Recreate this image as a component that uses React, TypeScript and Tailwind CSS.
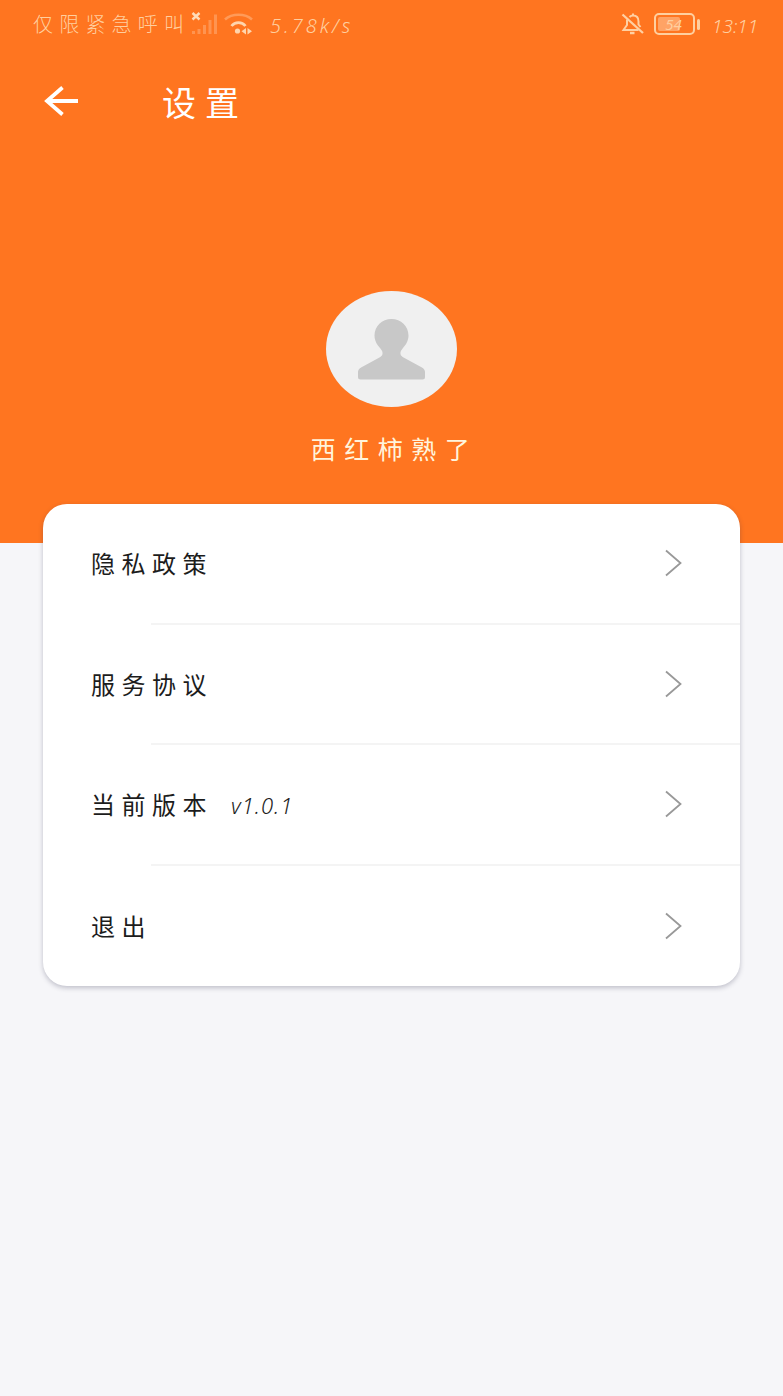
const menuItems = [
  { label: "隐私政策" },
  { label: "服务协议" },
  { label: "当前版本", detail: "v1.0.1" },
  { label: "退出" },
];

function SignalIcon() {
  return (
    <svg className="ml-[7px] h-[24px] w-[28px] shrink-0" viewBox="0 0 28 24" fill="none">
      <path d="M1.500 1l7 6.500M8.500 1l-7 6.500" stroke="#ffdcb8" strokeWidth="2.400" />
      <path d="M2.500 19v3M8 17v5M13.500 13v9M19 8v14M24.500 2.500v19.500" stroke="#ff9450" strokeWidth="3" />
    </svg>
  );
}

function WifiIcon() {
  return (
    <svg className="ml-[5px] h-[24px] w-[29px] shrink-0" viewBox="0 0 29 24" fill="none">
      <path d="M1 7.500C8 1.200 21 1.200 28 7.500" stroke="#ff9a58" strokeWidth="2.600" />
      <path d="M7.500 14c3.500-4.500 10.500-4.500 14 0" stroke="#ffd5ad" strokeWidth="2.800" />
      <circle cx="13.500" cy="19" r="2.600" fill="#ffd5ad" />
      <path d="M22 16v6.500l-4.500-3.250zM23.500 16v6.500l4.500-3.250z" fill="#ffd5ad" />
    </svg>
  );
}

function MutedBellIcon() {
  return (
    <svg className="h-[24px] w-[24px] shrink-0" viewBox="0 0 24 24" fill="none" stroke="#ffd0a3" strokeWidth="2">
      <path d="M6 7.500v5.500L2.500 18h15M8.500 5C9.500 4 10.700 3.500 12 3.500c3.500 0 5.500 2.500 5.500 6v3l2 2.500M12 3.500v-2" />
      <path d="M1.500 2.500l20.500 18.500" strokeWidth="2.300" />
      <path d="M9 21h4.500" strokeWidth="2.500" />
    </svg>
  );
}

function StatusBar() {
  return (
    <div className="flex h-[48px] items-center pl-[33px] pr-[26px] text-[#ffcf9f]">
      <span className="mt-[2px] w-[151px] shrink-0 whitespace-nowrap text-[20px] font-light leading-[24px] tracking-[6.2px]">
        仅限紧急呼叫
      </span>
      <SignalIcon />
      <WifiIcon />
      <span className="ml-[17px] mt-[3px] whitespace-nowrap text-[20px] font-light italic leading-[24px] tracking-[3px]">
        5.78k/s
      </span>
      <div className="ml-auto flex items-center">
        <MutedBellIcon />
        <div className="ml-[9px] flex h-[22px] w-[41px] items-center rounded-[5px] border-2 border-[#ffcf9f] p-[2px]">
          <span className="flex h-[14px] w-[22px] items-center justify-center rounded-[2px] bg-[#ffa365] pl-[9px] text-[15px] italic leading-[14px]">
            54
          </span>
        </div>
        <span className="ml-[2px] h-[11px] w-[3px] rounded-sm bg-[#ffcf9f]" />
        <span className="ml-[12px] mt-[3px] w-[45px] whitespace-nowrap text-[19px] font-light italic leading-[24px]">13:11</span>
      </div>
    </div>
  );
}

function BackIcon() {
  return (
    <svg className="h-[30px] w-[36px]" viewBox="0 0 36 30" fill="none" stroke="white" strokeWidth="3.800">
      <path d="M35 15H3.500M19.500 1.500L4 15l15.500 13.500" />
    </svg>
  );
}

function Avatar() {
  return (
    <div className="mt-[161px] flex h-[116px] w-[131px] justify-center rounded-[50%] bg-[#f0f0f0]">
      <svg className="mt-[28px] h-[61px] w-[69px]" viewBox="0 0 69 61" fill="#c8c8c8">
        <path d="M34.500 0C25 0 17.500 7.300 17.500 16.500c0 5.500 2.800 9.500 5.500 12.500 2 2.300 2.800 4 2.500 6-.3 1.700-1.500 2.700-3.500 3.700L4.500 48.200C2 49.500 1 51 1 53v5q0 2.500 2.500 2.500h62q2.500 0 2.500-2.500v-5c0-2-1-3.500-3.500-4.800L47 38.700c-2-1-3.200-2-3.500-3.700-.3-2 .5-3.700 2.500-6 2.700-3 5.500-7 5.500-12.500C51.500 7.300 44 0 34.500 0z" />
      </svg>
    </div>
  );
}

function MenuRow({ label, detail, divided }: { label: string; detail?: string; divided: boolean }) {
  return (
    <button className="flex w-full flex-1 flex-col text-left">
      <span className="flex w-full flex-1 items-center pl-[48px] pr-[58px] text-[24px] text-[#1c1c1c]">
        <span className="mt-[2px] whitespace-nowrap tracking-[6.500px]">{label}</span>
        {detail && <span className="ml-[18px] mt-[2px] text-[22px] font-light italic tracking-[1px]">{detail}</span>}
        <svg className="ml-auto h-[28px] w-[17px]" viewBox="0 0 17 28" fill="none" stroke="#999999" strokeWidth="1.800">
          <path d="M1 1.500L15.500 14 1 26.500" />
        </svg>
      </span>
      {divided && <span className="ml-[108px] h-[2px] self-stretch bg-[#f4f4f4]" />}
    </button>
  );
}

export default function App() {
  return (
    <main className="min-h-[1396px] w-full bg-[#f6f6f9] font-['Noto_Sans','Noto_Sans_CJK_SC',sans-serif]">
      <header className="flex h-[543px] flex-col bg-[#ff7520]">
        <StatusBar />
        <div className="flex h-[82px] items-center pl-[43px] pt-[24px]">
          <button aria-label="返回">
            <BackIcon />
          </button>
          <h1 className="ml-[83px] mt-[4px] text-[34px] leading-[40px] tracking-[9px] text-white">设置</h1>
        </div>
        <div className="flex flex-col items-center">
          <Avatar />
          <p className="mt-[25px] pl-[6px] text-[25px] leading-[34px] tracking-[8.500px] text-[#fff4dc]">西红柿熟了</p>
        </div>
      </header>
      <section className="relative mx-[43px] -mt-[39px] flex h-[482px] flex-col overflow-hidden rounded-[24px] bg-white shadow-[0_2px_5px_rgba(50,50,80,0.28)]">
        {menuItems.map((item, index) => (
          <MenuRow key={item.label} label={item.label} detail={item.detail} divided={index < menuItems.length - 1} />
        ))}
      </section>
    </main>
  );
}
